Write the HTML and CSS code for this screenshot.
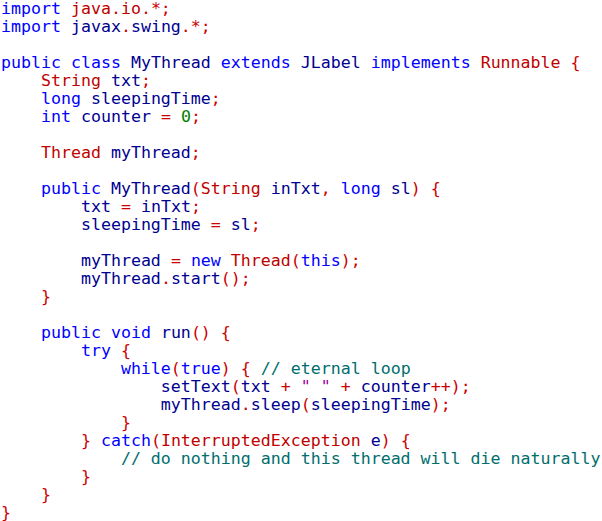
FILE: index.html
```html
<!DOCTYPE html>
<html>
<head>
<meta charset="utf-8">
<link rel="stylesheet" href="styles.css">
</head>
<body>
<pre class="code"><span class="k">import</span> <span class="t">java.io</span><span class="p">.*;</span>
<span class="k">import</span> <span class="i">javax</span><span class="p">.</span><span class="i">swing</span><span class="p">.*;</span>

<span class="k">public</span> <span class="k">class</span> <span class="i">MyThread</span> <span class="k">extends</span> <span class="i">JLabel</span> <span class="k">implements</span> <span class="t">Runnable</span> <span class="p">{</span>
    <span class="t">String</span> <span class="i">txt</span><span class="p">;</span>
    <span class="k">long</span> <span class="i">sleepingTime</span><span class="p">;</span>
    <span class="k">int</span> <span class="i">counter</span> <span class="p">=</span> <span class="n">0</span><span class="p">;</span>

    <span class="t">Thread</span> <span class="i">myThread</span><span class="p">;</span>

    <span class="k">public</span> <span class="i">MyThread</span><span class="p">(</span><span class="t">String</span> <span class="i">inTxt</span><span class="p">,</span> <span class="k">long</span> <span class="i">sl</span><span class="p">)</span> <span class="p">{</span>
        <span class="i">txt</span> <span class="p">=</span> <span class="i">inTxt</span><span class="p">;</span>
        <span class="i">sleepingTime</span> <span class="p">=</span> <span class="i">sl</span><span class="p">;</span>

        <span class="i">myThread</span> <span class="p">=</span> <span class="k">new</span> <span class="t">Thread</span><span class="p">(</span><span class="k">this</span><span class="p">);</span>
        <span class="i">myThread</span><span class="p">.</span><span class="i">start</span><span class="p">();</span>
    <span class="p">}</span>

    <span class="k">public</span> <span class="k">void</span> <span class="i">run</span><span class="p">()</span> <span class="p">{</span>
        <span class="k">try</span> <span class="p">{</span>
            <span class="k">while</span><span class="p">(</span><span class="k">true</span><span class="p">)</span> <span class="p">{</span> <span class="c">// eternal loop</span>
                <span class="i">setText</span><span class="p">(</span><span class="i">txt</span> <span class="p">+</span> <span class="s">" "</span> <span class="p">+</span> <span class="i">counter</span><span class="p">++);</span>
                <span class="i">myThread</span><span class="p">.</span><span class="i">sleep</span><span class="p">(</span><span class="i">sleepingTime</span><span class="p">);</span>
            <span class="p">}</span>
        <span class="p">}</span> <span class="k">catch</span><span class="p">(</span><span class="t">InterruptedException</span> <span class="i">e</span><span class="p">)</span> <span class="p">{</span>
            <span class="c">// do nothing and this thread will die naturally</span>
        <span class="p">}</span>
    <span class="p">}</span>
<span class="p">}</span></pre>
</body>
</html>
```
FILE: styles.css
```css
html, body {
  margin: 0;
  padding: 0;
  background: #ffffff;
}
.code {
  margin: 0;
  padding: 0 0 0 1px;
  font-family: "DejaVu Sans Mono", "Liberation Mono", monospace;
  font-size: 16.6px;
  line-height: 18px;
  color: #000090;
}
.k { color: #0000ff; }
.i { color: #000090; }
.t { color: #c00000; }
.p { color: #cc0000; }
.n { color: #008000; }
.c { color: #006e6e; }
.s { color: #a000a0; }
```
